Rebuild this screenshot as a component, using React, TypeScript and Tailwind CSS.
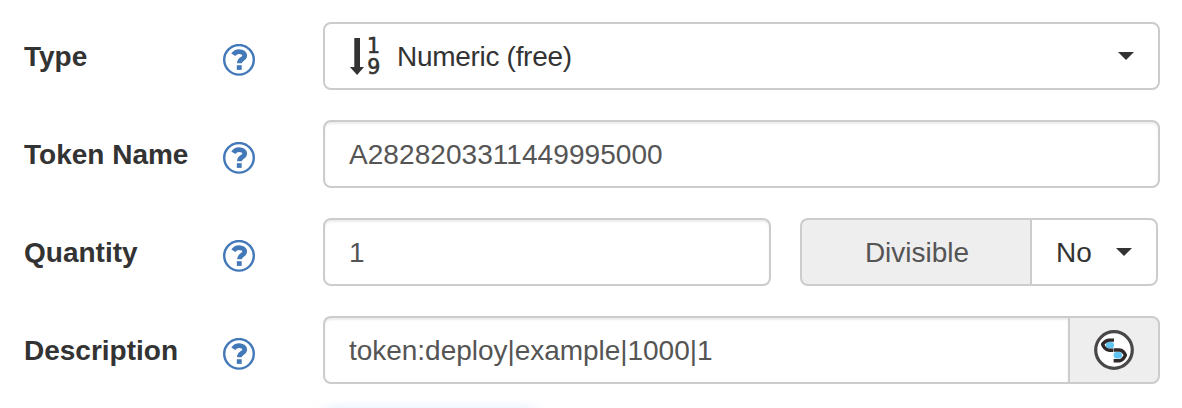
import type { ReactNode } from "react";

function HelpIcon() {
  return (
    <svg viewBox="0 0 32 32" className="mt-[21.5px] h-8 w-8 text-[#4379b8]" fill="none" stroke="currentColor" aria-label="Help">
      <circle cx="16" cy="15.8" r="14.8" strokeWidth="2.4" />
      <path d="M10.3 10.8C11.7 8.6 13.6 7.6 16.2 7.6c3 0 5.5 1.7 5.5 4 0 3.7-5.3 3.3-5.3 7.6" strokeWidth="4.8" />
      <rect x="13.8" y="21.2" width="4.9" height="4.7" fill="currentColor" stroke="none" />
    </svg>
  );
}

function NumericSortIcon() {
  return (
    <svg viewBox="0 0 32 40" className="mr-[16px] h-10 w-8 shrink-0 overflow-visible" fill="#333">
      <path d="M5.3 2H11v29h4L8.1 39 .9 31h4.4z" />
      <g fontFamily="DejaVu Sans, sans-serif" fontSize="20.5" stroke="#333" strokeWidth="0.6">
        <text x="18" y="17.2">1</text>
        <text x="18.2" y="38.4">9</text>
      </g>
    </svg>
  );
}

function Caret() {
  return (
    <svg viewBox="0 0 16 8" className="h-2 w-4 shrink-0" fill="#333">
      <path d="M0 0h16L8 8z" />
    </svg>
  );
}

function LinkLogo() {
  return (
    <svg viewBox="0 0 40 40" className="h-10 w-10">
      <circle cx="20" cy="20" r="18.3" fill="#fff" stroke="#4a4748" strokeWidth="3.2" />
      <rect x="12" y="12" width="8" height="6.2" rx="2.8" fill="#62c5f1" />
      <rect x="19.6" y="22" width="8.4" height="6.4" rx="2.8" fill="#62c5f1" />
      <g fill="none" stroke="#30292a" strokeWidth="3.4" strokeLinejoin="round">
        <path d="M20 10.1h-4.6q-4 .1-6.8 4.2 1.6 5 6.2 5.9h4.4" />
        <path d="M19.6 20h5.6q4.400.3 6.200 5.200-2.400 4.900-5.800 5.600h-6" />
      </g>
    </svg>
  );
}

function Row({ label, children }: { label: string; children: ReactNode }) {
  return (
    <div className="flex h-[68px]">
      <div className="w-[199px] shrink-0 pt-px text-[28px] leading-[68px] font-bold text-[#333]">{label}</div>
      <div className="w-[100px] shrink-0">
        <HelpIcon />
      </div>
      {children}
    </div>
  );
}

const box = "flex h-[68px] items-center border-2 border-[#ccc] text-[28px] leading-10";
const inset = "bg-white text-[#555] shadow-[inset_0_2px_2px_rgba(0,0,0,0.075)]";

export default function App() {
  return (
    <div className="flex h-[408px] w-[1182px] flex-col gap-[30px] overflow-hidden bg-white pt-[22px] pl-6 font-['Liberation_Sans',Arial,sans-serif]">
      <Row label="Type">
        <div className={`${box} w-[837px] rounded-lg pr-[24px] pl-[24px] text-[#333]`}>
          <NumericSortIcon />
          <span className="grow pt-0.5 tracking-[-0.3px]">Numeric (free)</span>
          <Caret />
        </div>
      </Row>
      <Row label="Token Name">
        <div className={`${box} ${inset} w-[837px] rounded-lg px-[24px] pt-0.5 tracking-[0.06px]`}>A2828203311449995000</div>
      </Row>
      <Row label="Quantity">
        <div className={`${box} ${inset} w-[448px] rounded-lg px-[24px] pt-0.5`}>1</div>
        <div className="ml-[29px] flex">
          <div className={`${box} w-[230px] justify-center rounded-l-lg border-r-0 bg-[#eee] pt-0.5 pl-[2px] text-[#555]`}>Divisible</div>
          <div className={`${box} w-[128px] justify-between rounded-r-lg bg-white pr-[24px] pl-[24px] text-[#333]`}>
            <span className="pt-0.5">No</span>
            <Caret />
          </div>
        </div>
      </Row>
      <Row label="Description">
        <div className={`${box} ${inset} w-[745px] rounded-l-lg border-r-0 px-[24px] pt-0.5 tracking-[-0.03px]`}>token:deploy|example|1000|1</div>
        <div className={`${box} w-[92px] justify-center rounded-r-lg bg-[#eee]`}>
          <LinkLogo />
        </div>
      </Row>
      <div className="ml-[299px] h-[68px] w-[214px] shrink-0 rounded-lg bg-[#337ab7] shadow-[0_0_16px_rgba(70,150,235,0.4)]" />
    </div>
  );
}
